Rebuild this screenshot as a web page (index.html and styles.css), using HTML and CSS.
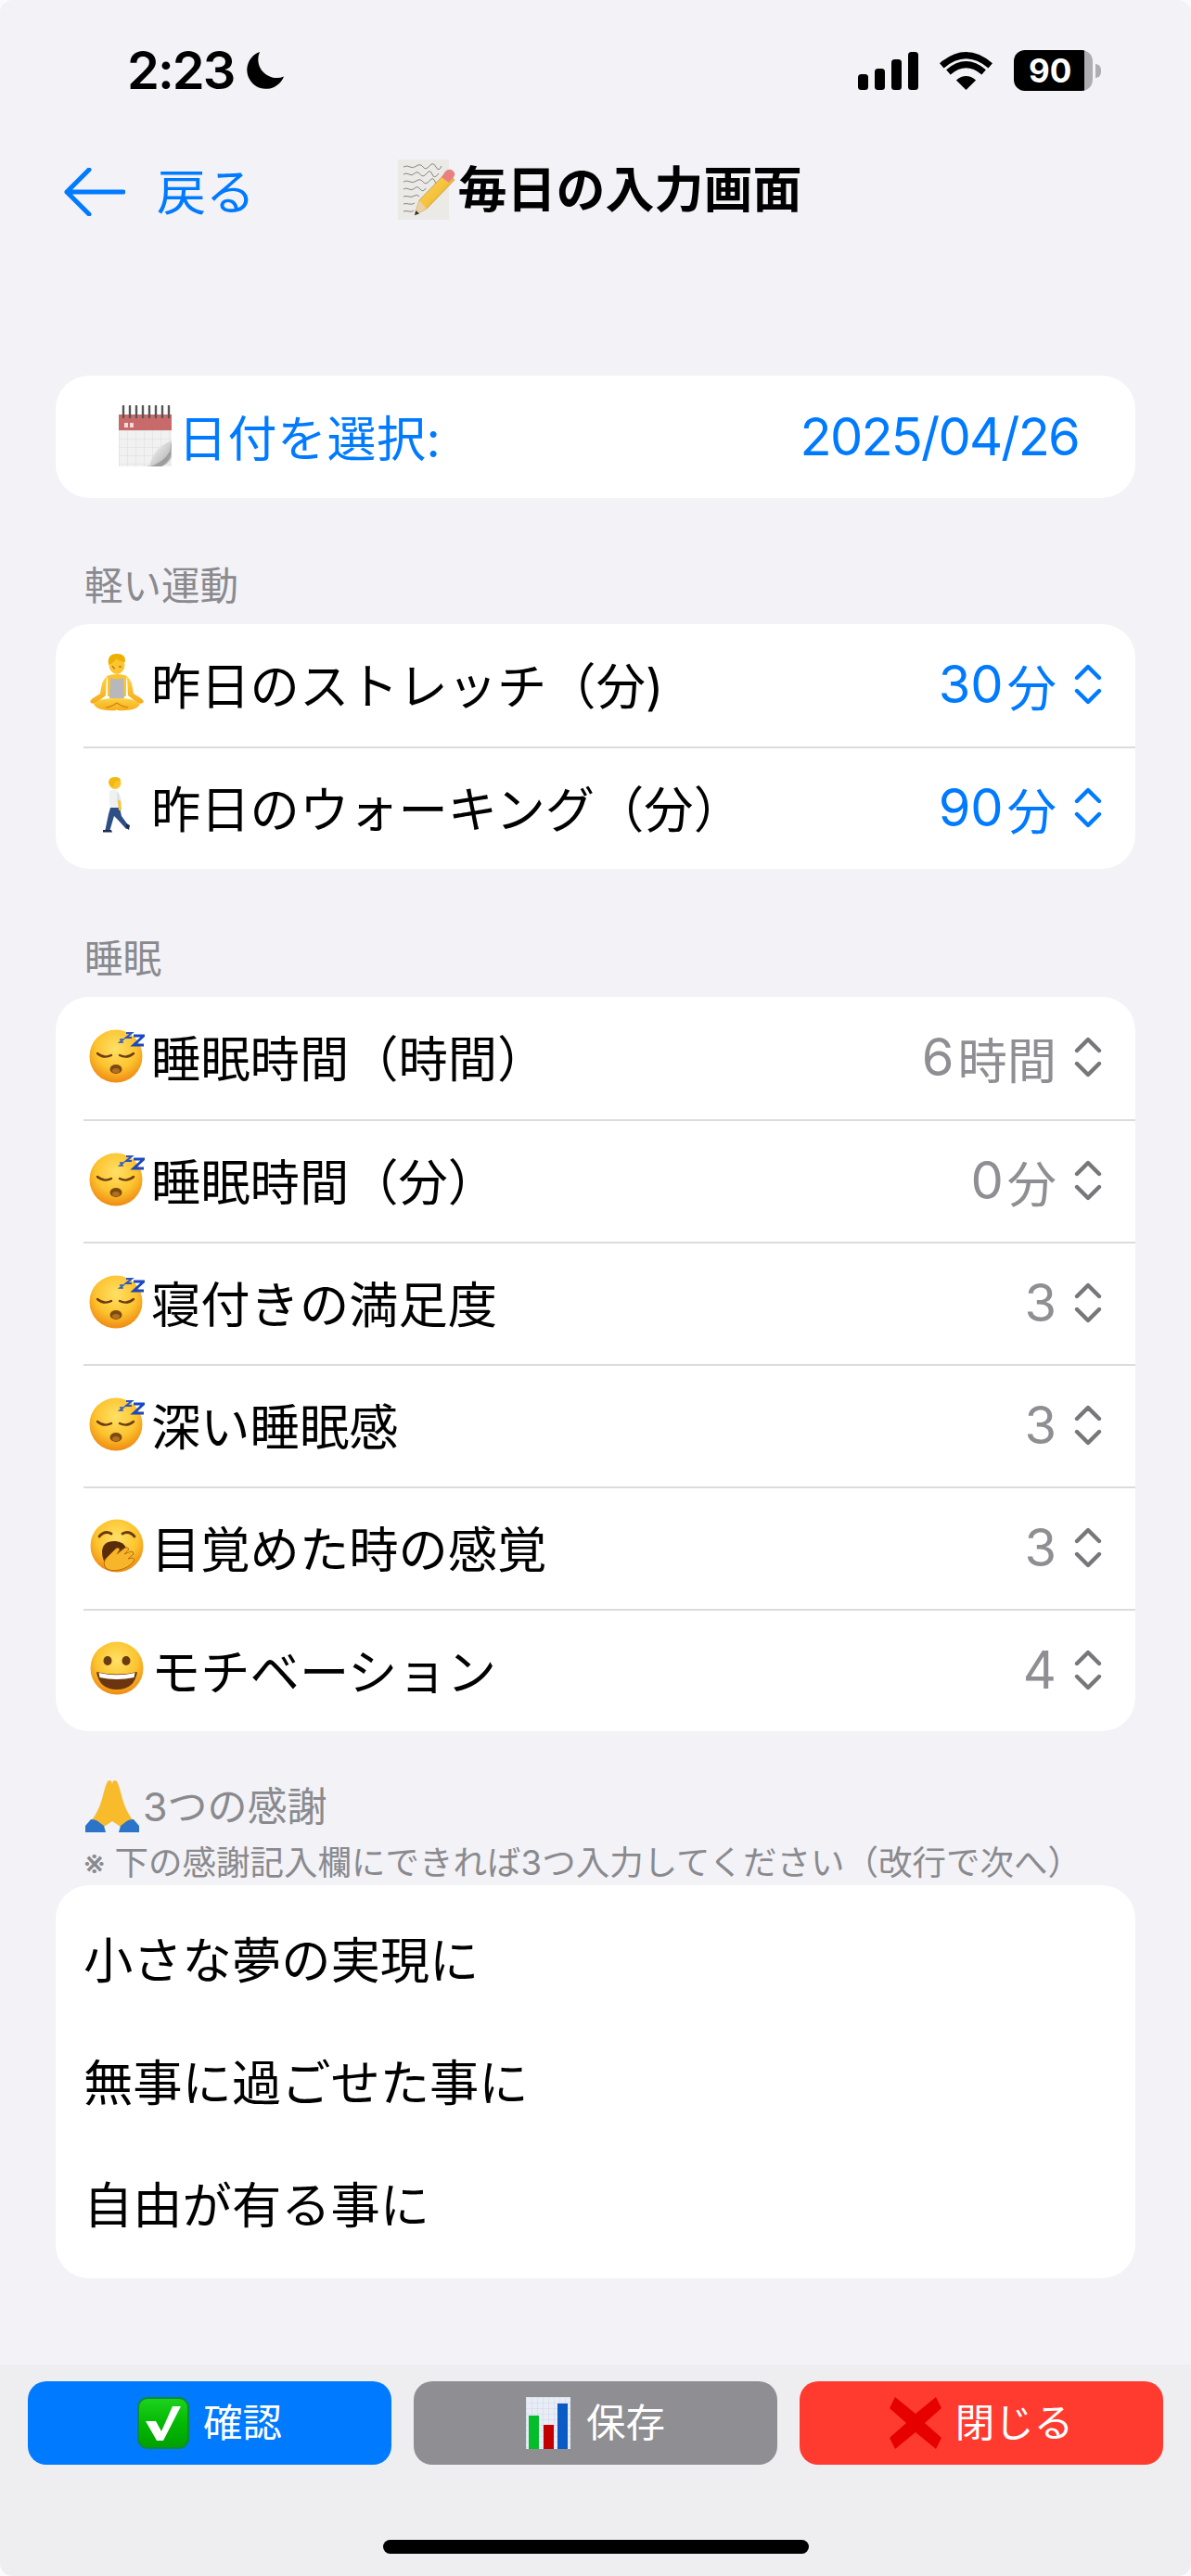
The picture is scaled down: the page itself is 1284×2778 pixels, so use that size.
FILE: index.html
```html
<!DOCTYPE html>
<html lang="ja">
<head>
<meta charset="utf-8">
<title>毎日の入力画面</title>
<link rel="stylesheet" href="styles.css">
</head>
<body>
<svg class="sprite" xmlns="http://www.w3.org/2000/svg" aria-hidden="true">
  <defs>
    <radialGradient id="face" cx="50%" cy="35%" r="65%">
      <stop offset="0" stop-color="#ffe066"/><stop offset=".6" stop-color="#fcc42f"/><stop offset="1" stop-color="#f08a12"/>
    </radialGradient>
    <linearGradient id="skin" x1="0" y1="0" x2="0" y2="1">
      <stop offset="0" stop-color="#ffd23f"/><stop offset="1" stop-color="#f6ab1c"/>
    </linearGradient>
    <linearGradient id="green" x1="0" y1="0" x2="0" y2="1">
      <stop offset="0" stop-color="#1ed31e"/><stop offset=".5" stop-color="#04b804"/><stop offset="1" stop-color="#00a000"/>
    </linearGradient>
    <linearGradient id="pencil" x1="0" y1="0" x2="1" y2="1">
      <stop offset="0" stop-color="#ffe06a"/><stop offset="1" stop-color="#eaa614"/>
    </linearGradient>
    <linearGradient id="curl" x1="0" y1="0" x2="1" y2="1">
      <stop offset="0" stop-color="#ffffff"/><stop offset="1" stop-color="#a9a9a9"/>
    </linearGradient>
    <pattern id="grid" width="6" height="6" patternUnits="userSpaceOnUse">
      <rect width="6" height="6" fill="#e9edf6"/><path d="M0 0H6M0 0V6" stroke="#cfd6e6" stroke-width="1" fill="none"/>
    </pattern>
    <pattern id="calgrid" width="9" height="9" patternUnits="userSpaceOnUse">
      <rect width="9" height="9" fill="#f1f1f1"/><path d="M0 0H9M0 0V9" stroke="#dcdcdc" stroke-width="1" fill="none"/>
    </pattern>
  </defs>

  <symbol id="i-sleep" viewBox="0 0 60 60">
    <circle cx="29" cy="31" r="28.5" fill="url(#face)"/>
    <path d="M9 28q7 6 15 2M33 30q8 4 15-2" fill="none" stroke="#6b3b12" stroke-width="2.4" stroke-linecap="round"/>
    <ellipse cx="29" cy="45" rx="6.5" ry="5" fill="#7a4a12"/>
    <ellipse cx="29" cy="46.500" rx="4" ry="2.600" fill="#b3701f"/>
    <polyline points="33,13 37,13 33,16 37,16" fill="none" stroke="#2a55c8" stroke-width="1.500"/>
    <polyline points="40,6 46,6 40,11 46,11" fill="none" stroke="#2a55c8" stroke-width="2"/>
    <polyline points="48,9 59,9 48,19 59,19" fill="none" stroke="#1b47c0" stroke-width="2.800"/>
  </symbol>

  <symbol id="i-yawn" viewBox="0 0 60 60">
    <circle cx="30" cy="30" r="28.5" fill="url(#face)"/>
    <path d="M11 20q6-7 13-3M36 17q7-4 13 3" fill="none" stroke="#6b3b12" stroke-width="2.800" stroke-linecap="round"/>
    <path d="M14 36q1-12 15-11 9 1 11 8L20 52q-6-6-6-16z" fill="#5b2c0a"/>
    <path d="M18 54q-4-6 1-11l10-10q3-2 4 1l-3 5 9-7q3-1 4 2l-5 5 7-3q3 0 3 3l-6 5 5-1q3 1 1 4-6 7-15 9-9 2-15-2z" fill="#f7b62a" stroke="#b56f10" stroke-width="1"/>
  </symbol>

  <symbol id="i-grin" viewBox="0 0 60 60">
    <circle cx="30" cy="30" r="28.5" fill="url(#face)"/>
    <ellipse cx="20" cy="22" rx="4.500" ry="5" fill="#6b3b12"/>
    <ellipse cx="40" cy="22" rx="4.500" ry="5" fill="#6b3b12"/>
    <path d="M8 34q22 5 44 0q-3 19-22 19T8 34z" fill="#6b3510"/>
    <path d="M10.500 35q19.500 4.500 39 0l-1 5q-18.500 4-37 0z" fill="#fff"/>
  </symbol>

  <symbol id="i-meditate" viewBox="0 0 64 62">
    <path d="M21 25q-5 2-7 18l-8 5q-4 3-2 5 3 2 7-1l9-7zM43 25q5 2 7 18l8 5q4 3 2 5-3 2-7-1l-9-7z" fill="url(#skin)"/>
    <ellipse cx="32" cy="12" rx="8.500" ry="10" fill="#fcc42f"/>
    <path d="M23 12q-2-12 9-12 10 0 9 9-7-1-10-4-1 4-8 7z" fill="#eeb000"/>
    <path d="M27 13q1 3 3 3M34 14h3" stroke="#8a5a10" stroke-width="1" fill="none"/>
    <path d="M21 24q11-4 22 0l-1 5v17H22V29z" fill="#fcc42f"/>
    <path d="M25 26q7 3 14 0l1 22H24z" fill="#b6b8bb"/>
    <path d="M7 54q8-7 25-6 17-1 25 6-2 6-15 7-10 1-10-1 0 2-10 1-13-1-15-7z" fill="url(#skin)"/>
    <path d="M20 58q7-1 12-5 5 4 12 5" fill="none" stroke="#c9820f" stroke-width="1.200"/>
  </symbol>

  <symbol id="i-walk" viewBox="0 0 32 62">
    <ellipse cx="14" cy="6.500" rx="6.500" ry="6.500" fill="#fcc42f"/>
    <path d="M7 6q0-6 7-6 6 0 6 4-5-1-7 4l-1 3q-4-1-5-5z" fill="#f2b90f"/>
    <path d="M8 15q5-2 9 0 3 3 4 12l-2 7H9q-2-10-1-19z" fill="#eef0f2"/>
    <path d="M16 16q3 2 4 10l1 9-2 1-3-11z" fill="#dfe2e6"/>
    <path d="M9 33h10l2 9 8 11-3 3-9-10-4-4-5 17H3l4-19z" fill="#2d4f85"/>
    <path d="M1 57h9l1 2.500H1zM26 50l4 2-1 5-3-2z" fill="#1d2c52"/>
    <path d="M17 25l3 .5 1 10-3 .5z" fill="#fcc42f"/>
  </symbol>

  <g id="pray-half">
    <path d="M26 0Q29 0 29 5V44L20 50 6 44Q14 34 18 20 21 8 23 3 24 0 26 0Z" fill="#f8bb2c"/>
    <path d="M6 42Q12 42 16 46L20 49 22 56H0V49Z" fill="#2b74c9"/>
  </g>
  <symbol id="i-pray" viewBox="0 0 58 56">
    <use href="#pray-half"/>
    <use href="#pray-half" transform="matrix(-1 0 0 1 58 0)"/>
  </symbol>

  <symbol id="i-memo" viewBox="0 0 62 66">
    <rect x="0" y="0" width="55" height="65" fill="#eceae6"/>
    <g fill="none" stroke="#5a5a5a" stroke-width=".7">
      <path d="M6 8q4-2 7 0t7-1 7 1 7-1 7 1 6-1"/>
      <path d="M6 16q3-2 6 0t6-1 6 1 7-1 6 1 7-1"/>
      <path d="M6 24q4-2 7 0t7-1 7 1 7-1 6 1 8-1"/>
      <path d="M6 32q3-2 6 0t6-1 6 1 6-1"/>
      <path d="M6 40q3-1 6 0t6-1 5 1"/>
      <path d="M6 48q3-1 6 0t6-1"/>
      <path d="M6 56q3-1 6 0t5-1"/>
    </g>
    <path d="M18 60l5-16 29-30 9 8-30 31z" fill="url(#pencil)" stroke="#b57f10" stroke-width=".6"/>
    <path d="M47 19l4-6q4-4 8-1 4 3 1 7l-5 6z" fill="#e87f80"/>
    <path d="M18 60l5-16 8 9z" fill="#e9d0a7"/>
    <path d="M18 60l1.500-5 3.500 3.500z" fill="#333"/>
  </symbol>

  <symbol id="i-cal" viewBox="0 0 58 66">
    <rect x="0" y="22" width="57" height="44" fill="url(#calgrid)"/>
    <rect x="0" y="10" width="57" height="17" fill="#c96a6a"/>
    <g stroke="#555" stroke-width="2.400" stroke-linecap="round">
      <path d="M5 1v12M12 1v12M19 1v12M26 1v12M33 1v12M40 1v12M47 1v12M54 1v12"/>
    </g>
    <path d="M6 24v-5h4v5zM12 24v-5h4v5z" fill="#f0dada"/>
    <path d="M36 66q4-20 21-26v16q-4 8-11 10z" fill="url(#curl)"/>
    <path d="M30 66q14-2 21-16l6-10-1 14q-3 8-10 12z" fill="#8d8d8d" opacity=".7"/>
    <path d="M33 66q4-20 24-28l-2 12q-7 12-22 16z" fill="url(#curl)"/>
  </symbol>

  <symbol id="i-check" viewBox="0 0 56 56">
    <rect x="1" y="1" width="54" height="54" rx="10" fill="url(#green)" stroke="#0b8a3a" stroke-width="2"/>
    <path d="M9 26l11 0 6 11L38 10h9L28 47h-7z" fill="#fff"/>
  </symbol>

  <symbol id="i-chart" viewBox="0 0 48 56">
    <rect width="48" height="56" fill="url(#grid)"/>
    <rect x="3" y="20" width="11" height="36" fill="#05bd2b"/>
    <rect x="19" y="30" width="11" height="26" fill="#c30000"/>
    <rect x="34" y="7" width="11" height="49" fill="#0a5cc4"/>
  </symbol>

  <symbol id="i-x" viewBox="0 0 56 56">
    <path d="M0 12L6 0l22 18L50 0l6 12-18 16 18 16-6 12-22-18L6 56 0 44l18-16z" fill="#e60000"/>
  </symbol>

  <symbol id="i-updown" viewBox="0 0 30 44">
    <path d="M3 15L15 3l12 12M3 29l12 12 12-12" fill="none" stroke="currentColor" stroke-width="4.400" stroke-linecap="round" stroke-linejoin="round"/>
  </symbol>
</svg>

<header class="status">
  <div class="status-left">
    <span class="clock">2:23</span>
    <svg class="moon" viewBox="0 0 40 41"><path d="M14 0A20.500 20.500 0 1 0 40 26.500 20 20 0 0 1 14 0Z" fill="#000"/></svg>
  </div>
  <div class="status-right">
    <svg class="signal" viewBox="0 0 65 41" fill="#000">
      <rect x="0" y="24" width="11" height="17" rx="3.500"/>
      <rect x="18" y="18" width="11" height="23" rx="3.500"/>
      <rect x="36" y="8" width="11" height="33" rx="3.500"/>
      <rect x="54" y="0" width="11" height="41" rx="3.500"/>
    </svg>
    <svg class="wifi" viewBox="0 0 57 42">
      <path d="M28.500 42L17.900 31.400Q28.500 22.500 39.100 31.400Z" fill="#000"/>
      <path d="M9.400 22.900Q28.500 6.500 47.600 22.900M2.300 15.800Q28.500 -6.500 54.700 15.800" fill="none" stroke="#000" stroke-width="7"/>
    </svg>
    <div class="battery"><div class="battery-body"><span class="battery-level">90</span></div><span class="battery-cap"></span></div>
  </div>
</header>

<nav class="nav">
  <a class="back">
    <svg class="back-arrow" viewBox="0 0 66 52"><path d="M64 26H3M27 2L3 26l24 24" fill="none" stroke="#007aff" stroke-width="5" stroke-linecap="round" stroke-linejoin="round"/></svg>
    <span class="back-text">戻る</span>
  </a>
  <h1 class="title"><svg class="ic-memo"><use href="#i-memo"/></svg>毎日の入力画面</h1>
  <span></span>
</nav>

<main class="content">
  <section class="card date-card">
    <div class="date-row">
      <span class="date-label"><svg class="ic-cal"><use href="#i-cal"/></svg>日付を選択:</span>
      <span class="date-value">2025/04/26</span>
    </div>
  </section>

  <h2 class="section-label">軽い運動</h2>
  <section class="card">
    <div class="row">
      <span class="row-label"><span class="emoji"><svg class="ic-meditate"><use href="#i-meditate"/></svg></span>昨日のストレッチ（分)</span>
      <span class="row-value blue">30<span class="unit">分</span><svg class="ic-updown"><use href="#i-updown"/></svg></span>
    </div>
    <div class="row">
      <span class="row-label"><span class="emoji"><svg class="ic-walk"><use href="#i-walk"/></svg></span>昨日のウォーキング（分）</span>
      <span class="row-value blue">90<span class="unit">分</span><svg class="ic-updown"><use href="#i-updown"/></svg></span>
    </div>
  </section>

  <h2 class="section-label sleep-label">睡眠</h2>
  <section class="card">
    <div class="row">
      <span class="row-label"><span class="emoji"><svg class="ic-face"><use href="#i-sleep"/></svg></span>睡眠時間（時間）</span>
      <span class="row-value">6<span class="unit">時間</span><svg class="ic-updown"><use href="#i-updown"/></svg></span>
    </div>
    <div class="row">
      <span class="row-label"><span class="emoji"><svg class="ic-face"><use href="#i-sleep"/></svg></span>睡眠時間（分）</span>
      <span class="row-value">0<span class="unit">分</span><svg class="ic-updown"><use href="#i-updown"/></svg></span>
    </div>
    <div class="row">
      <span class="row-label"><span class="emoji"><svg class="ic-face"><use href="#i-sleep"/></svg></span>寝付きの満足度</span>
      <span class="row-value">3<svg class="ic-updown"><use href="#i-updown"/></svg></span>
    </div>
    <div class="row">
      <span class="row-label"><span class="emoji"><svg class="ic-face"><use href="#i-sleep"/></svg></span>深い睡眠感</span>
      <span class="row-value">3<svg class="ic-updown"><use href="#i-updown"/></svg></span>
    </div>
    <div class="row">
      <span class="row-label"><span class="emoji"><svg class="ic-face"><use href="#i-yawn"/></svg></span>目覚めた時の感覚</span>
      <span class="row-value">3<svg class="ic-updown"><use href="#i-updown"/></svg></span>
    </div>
    <div class="row">
      <span class="row-label"><span class="emoji"><svg class="ic-face"><use href="#i-grin"/></svg></span>モチベーション</span>
      <span class="row-value">4<svg class="ic-updown"><use href="#i-updown"/></svg></span>
    </div>
  </section>

  <h2 class="section-label thanks-label"><svg class="ic-pray"><use href="#i-pray"/></svg>3つの感謝</h2>
  <p class="note">※ 下の感謝記入欄にできれば3つ入力してください（改行で次へ）</p>
  <section class="card text-card">
    <p class="text-line">小さな夢の実現に</p>
    <p class="text-line">無事に過ごせた事に</p>
    <p class="text-line">自由が有る事に</p>
  </section>
</main>

<footer class="bar">
  <div class="buttons">
    <button class="btn btn-blue"><svg class="ic-check"><use href="#i-check"/></svg>確認</button>
    <button class="btn btn-gray"><svg class="ic-chart"><use href="#i-chart"/></svg>保存</button>
    <button class="btn btn-red"><svg class="ic-x"><use href="#i-x"/></svg>閉じる</button>
  </div>
  <div class="home-indicator"></div>
</footer>
</body>
</html>
```

FILE: styles.css
```css
* { box-sizing: border-box; }

html { background: #fbfbfd; }

body {
  margin: 0;
  width: 1284px;
  height: 2778px;
  display: flex;
  flex-direction: column;
  overflow: hidden;
  background: #f2f2f7;
  border-radius: 14px;
  color: #000;
  font-family: Inter, "Noto Sans CJK JP", sans-serif;
}

.sprite { display: block; width: 0; height: 0; overflow: hidden; flex: none; }

/* status bar */
.status {
  display: flex;
  justify-content: space-between;
  align-items: center;
  height: 52px;
  margin-top: 50px;
  padding: 0 97px 0 137px;
  flex: none;
}
.status-left { display: flex; align-items: center; gap: 14px; }
.clock { font-size: 56px; font-weight: 600; line-height: 52px; letter-spacing: -2px; }
.moon { width: 40px; height: 41px; }
.status-right { display: flex; align-items: center; gap: 23px; }
.signal { width: 65px; height: 41px; }
.wifi { width: 57px; height: 42px; }
.battery { display: flex; align-items: center; gap: 3px; }
.battery-body {
  width: 85px;
  height: 44px;
  border-radius: 12px;
  background: linear-gradient(90deg, #000 0, #000 76px, #aeaeb2 76px);
  display: flex;
  align-items: center;
  padding-left: 16px;
}
.battery-level { color: #fff; font-size: 35px; font-weight: 700; line-height: 44px; }
.battery-cap { width: 6px; height: 15px; background: #aeaeb2; border-radius: 0 8px 8px 0; }

/* nav */
.nav {
  display: grid;
  grid-template-columns: 1fr auto 1fr;
  align-items: center;
  height: 100px;
  margin-top: 53px;
  padding: 0 60px 0 69px;
  flex: none;
}
.back { display: flex; align-items: center; gap: 34px; padding-top: 3px; color: #007aff; font-size: 53px; line-height: 60px; }
.back-text { padding-top: 2px; }
.back-arrow { width: 66px; height: 52px; }
.title {
  display: flex;
  align-items: center;
  margin: 0;
  font-size: 53px;
  font-weight: 700;
  line-height: 66px;
  white-space: nowrap;
}
.ic-memo { width: 62px; height: 66px; margin-right: 3px; }

/* content */
.content { flex: 1; padding: 150px 60px 0; }
.card { background: #fff; border-radius: 36px; overflow: hidden; }

.date-row {
  display: flex;
  justify-content: space-between;
  align-items: center;
  height: 132px;
  padding: 0 61px 0 68px;
  color: #007aff;
  font-size: 53px;
}
.date-label { display: flex; align-items: center; padding-bottom: 2px; letter-spacing: .5px; }
.date-value { font-size: 56px; letter-spacing: -1.8px; }
.ic-cal { width: 58px; height: 66px; margin-right: 6px; }

.section-label {
  margin: 70px 0 16px;
  padding-left: 31px;
  height: 50px;
  font-size: 41.500px;
  font-weight: 400;
  line-height: 50px;
  color: #8a8a8e;
}
.sleep-label { margin-top: 72px; }
.thanks-label {
  display: flex;
  align-items: center;
  height: 56px;
  line-height: 56px;
  margin: 53px 0 0;
  padding-left: 32px;
  font-size: 43px;
}
.ic-pray { width: 58px; height: 56px; margin-right: 4px; }
.note {
  margin: 9px 0 0;
  padding-left: 30px;
  height: 48px;
  font-size: 36.500px;
  line-height: 48px;
  color: #8a8a8e;
  white-space: nowrap;
}

.row {
  display: flex;
  justify-content: space-between;
  align-items: center;
  height: 132px;
  margin-left: 30px;
  padding-right: 36px;
  border-top: 2px solid #dcdcde;
  font-size: 53.300px;
}
.row:first-child { border-top: 0; }
.row-label { display: flex; align-items: center; padding-bottom: 6px; white-space: nowrap; }
.emoji { display: flex; justify-content: center; width: 72px; margin-right: 1px; }
.ic-face { width: 60px; height: 60px; }
.ic-meditate { width: 64px; height: 62px; }
.ic-walk { width: 32px; height: 62px; }

.row-value { display: flex; align-items: center; color: #8e8e93; font-size: 56px; padding-bottom: 2px; }
.row-value.blue { color: #007aff; }
.unit { margin-left: 4px; font-size: 53.300px; }
.ic-updown { width: 30px; height: 44px; margin-left: 19px; color: #77777b; }
.blue .ic-updown { color: #007aff; }

.text-card { padding: 16px 30px 12px; }
.text-line { margin: 0; height: 132px; font-size: 53.300px; line-height: 132px; }

/* bottom bar */
.bar {
  flex: none;
  height: 228px;
  padding: 18px 30px 0;
  background: #eeeef1;
}
.buttons { display: grid; grid-template-columns: repeat(3, 392px); gap: 24px; }
.btn {
  display: flex;
  align-items: center;
  justify-content: center;
  height: 90px;
  padding: 0;
  border: 0;
  border-radius: 20px;
  color: #fff;
  font: 400 42.500px/56px Inter, "Noto Sans CJK JP", sans-serif;
}
.btn-blue { background: #007aff; }
.btn-gray { background: #8e8e93; }
.btn-red { background: #ff3b30; }
.ic-check { width: 56px; height: 56px; margin-right: 15px; }
.ic-chart { width: 48px; height: 56px; margin-right: 17px; }
.ic-x { width: 56px; height: 56px; margin-right: 15px; }

.home-indicator {
  width: 459px;
  height: 15px;
  margin: 81px auto 0;
  border-radius: 8px;
  background: #000;
}
```
